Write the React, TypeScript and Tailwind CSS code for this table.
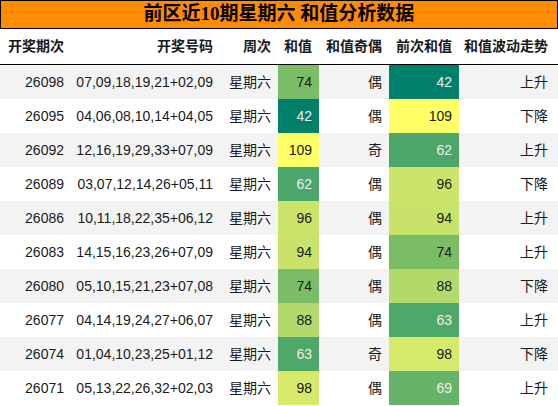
const rows = [
  { issue: "26098", nums: "07,09,18,19,21+02,09", sum: 74, parity: "偶", prev: 42, trend: "上升" },
  { issue: "26095", nums: "04,06,08,10,14+04,05", sum: 42, parity: "偶", prev: 109, trend: "下降" },
  { issue: "26092", nums: "12,16,19,29,33+07,09", sum: 109, parity: "奇", prev: 62, trend: "上升" },
  { issue: "26089", nums: "03,07,12,14,26+05,11", sum: 62, parity: "偶", prev: 96, trend: "下降" },
  { issue: "26086", nums: "10,11,18,22,35+06,12", sum: 96, parity: "偶", prev: 94, trend: "上升" },
  { issue: "26083", nums: "14,15,16,23,26+07,09", sum: 94, parity: "偶", prev: 74, trend: "上升" },
  { issue: "26080", nums: "05,10,15,21,23+07,08", sum: 74, parity: "偶", prev: 88, trend: "下降" },
  { issue: "26077", nums: "04,14,19,24,27+06,07", sum: 88, parity: "偶", prev: 63, trend: "上升" },
  { issue: "26074", nums: "01,04,10,23,25+01,12", sum: 63, parity: "奇", prev: 98, trend: "下降" },
  { issue: "26071", nums: "05,13,22,26,32+02,03", sum: 98, parity: "偶", prev: 69, trend: "上升" },
];

// heat colour per value (teal low -> yellow high)
const heat: Record<number, { bg: string; light: boolean }> = {
  42: { bg: "bg-[#00806a]", light: true },
  62: { bg: "bg-[#4ba66a]", light: true },
  63: { bg: "bg-[#4ea86a]", light: true },
  69: { bg: "bg-[#66b46a]", light: true },
  74: { bg: "bg-[#7bbd67]", light: false },
  88: { bg: "bg-[#b2d96a]", light: false },
  94: { bg: "bg-[#c8e26a]", light: false },
  96: { bg: "bg-[#cde46a]", light: false },
  98: { bg: "bg-[#d6e96a]", light: false },
  109: { bg: "bg-[#ffff66]", light: false },
};

const cols = "grid grid-cols-[71px_149px_58px_41px_70px_70px_99px]";

function HeatCell({ v }: { v: number }) {
  const h = heat[v];
  return (
    <div className={`${h.bg} ${h.light ? "text-[#eeeeee]" : "text-[#1a1a1a]"} flex items-center justify-end pr-[7px]`}>
      {v}
    </div>
  );
}

export default function App() {
  return (
    <div
      className="w-[558px] h-[406px] bg-white text-[14px] text-[#1a1a1a] overflow-hidden"
      style={{ fontFamily: '"Liberation Sans", "Noto Sans CJK SC", sans-serif' }}
    >
      <div
        className="h-[29px] bg-[#ff8c00] border border-black flex items-center justify-center text-[19px] font-bold text-black"
        style={{ fontFamily: '"Liberation Serif", "Noto Sans CJK SC", serif' }}
      >
        前区近10期星期六 和值分析数据
      </div>

      <div className={`${cols} h-[36px] font-bold border-b border-black`}>
        <div className="flex items-center justify-end pr-[7px]">开奖期次</div>
        <div className="flex items-center justify-end pr-[7px]">开奖号码</div>
        <div className="flex items-center justify-end pr-[7px]">周次</div>
        <div className="flex items-center justify-end pr-[7px]">和值</div>
        <div className="flex items-center justify-end pr-[7px]">和值奇偶</div>
        <div className="flex items-center justify-end pr-[7px]">前次和值</div>
        <div className="flex items-center justify-end pr-[10px]">和值波动走势</div>
      </div>

      {rows.map((r, i) => (
        <div key={r.issue} className={`${cols} h-[34px] ${i % 2 === 0 ? "bg-[#f3f3f3]" : "bg-white"}`}>
          <div className="flex items-center justify-end pr-[7px]">{r.issue}</div>
          <div className="flex items-center justify-end pr-[7px]">{r.nums}</div>
          <div className="flex items-center justify-end pr-[7px]">星期六</div>
          <HeatCell v={r.sum} />
          <div className="flex items-center justify-end pr-[7px]">{r.parity}</div>
          <HeatCell v={r.prev} />
          <div className="flex items-center justify-end pr-[10px]">{r.trend}</div>
        </div>
      ))}
    </div>
  );
}
